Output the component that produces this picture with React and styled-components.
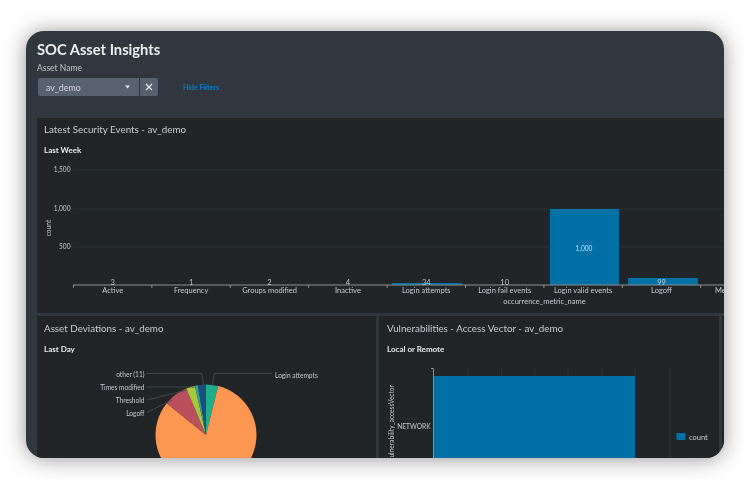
import React from "react";
import styled, { createGlobalStyle } from "styled-components";

const Global = createGlobalStyle`
  html, body { margin: 0; padding: 0; background: #fff; }
  body { font-family: Lato, "Open Sans", "Liberation Sans", sans-serif; }
`;

const Stage = styled.div`
  width: 750px;
  height: 480px;
  padding: 31px 0 0 26px;
  box-sizing: border-box;
  overflow: hidden;
`;
const Frame = styled.div`
  width: 698px;
  height: 427px;
  border-radius: 18px;
  box-shadow: 0 1px 22px rgba(0, 0, 0, 0.42);
  overflow: hidden;
  background: #31373f;
  display: flex;
  flex-direction: column;
`;
const Blur = styled.div`
  filter: blur(0.4px);
  display: flex;
  flex-direction: column;
  height: 100%;
`;
const Header = styled.header`
  height: 87px;
  flex: none;
  box-sizing: border-box;
  padding: 10px 0 0 11px;
`;
const Title = styled.h1`
  margin: 0;
  font-size: 14.7px;
  line-height: 17px;
  font-weight: 700;
  color: #eceef0;
`;
const FilterLabel = styled.div`
  margin-top: 4px;
  font-size: 8.5px;
  line-height: 12px;
  color: #c3c8cd;
`;
const FilterRow = styled.div`
  margin-top: 4px;
  display: flex;
  align-items: center;
  padding-left: 1px;
`;
const Select = styled.div`
  width: 101px;
  height: 18px;
  box-sizing: border-box;
  padding: 0 9px 0 8px;
  background: #58626e;
  border-radius: 2px 0 0 2px;
  display: flex;
  align-items: center;
  justify-content: space-between;
  font-size: 8.8px;
  color: #d4d8dc;
`;
const ClearButton = styled.div`
  width: 18px;
  height: 18px;
  margin-left: 1px;
  background: #58626e;
  border-radius: 0 2px 2px 0;
  display: flex;
  align-items: center;
  justify-content: center;
`;
const HideLink = styled.span`
  margin-left: 25px;
  font-size: 7px;
  font-weight: 700;
  color: #0a7cc4;
`;
const Dashboard = styled.div`
  flex: 1;
  min-height: 0;
  margin-left: 11px;
  display: flex;
  flex-direction: column;
  gap: 3px;
`;
const Row = styled.div`
  display: flex;
  gap: 3px;
  flex: ${(p) => (p.$grow ? 1 : "none")};
  min-height: 0;
`;
const Panel = styled.section`
  width: ${(p) => p.$w}px;
  height: ${(p) => (p.$h ? `${p.$h}px` : "auto")};
  flex: none;
  background: #212527;
  overflow: hidden;
  box-sizing: border-box;
  padding: ${(p) => p.$top ?? 6}px 0 0 ${(p) => p.$left ?? 7}px;
`;
const PanelTitle = styled.h2`
  margin: 0;
  font-size: 9.8px;
  line-height: 13px;
  font-weight: 400;
  color: #c8ccd0;
`;
const PanelSub = styled.h3`
  margin: 9px 0 0;
  font-size: 8px;
  line-height: 11px;
  font-weight: 700;
  color: #e6e8ea;
`;
const Chart = styled.svg`
  display: block;
  margin: 4px 0 0 ${(p) => -(p.$indent ?? 7)}px;
  text {
    font-family: Lato, "Open Sans", "Liberation Sans", sans-serif;
    font-size: 7.5px;
    fill: #c6cace;
  }
  text.small {
    font-size: 6.6px;
  }
`;

const categories = ["Active", "Frequency", "Groups modified", "Inactive", "Login attempts", "Login fail events", "Login valid events", "Logoff", "Member added"];
const values = ["3", "1", "2", "4", "34", "10", null, "99", null];
const slices = [
  [0, 14, "#1fae8b"],
  [14, 309, "#fd9650"],
  [309, 337, "#b9505c"],
  [337, 347.3, "#aac63a"],
  [347.3, 350.8, "#2aa5b0"],
  [350.8, 360, "#1a5077"],
];

function slicePath(a, b, cx = 206, cy = 435, r = 50.5) {
  const p = (d) => [cx + r * Math.sin((d * Math.PI) / 180), cy - r * Math.cos((d * Math.PI) / 180)];
  const [x1, y1] = p(a);
  const [x2, y2] = p(b);
  return `M${cx} ${cy}L${x1} ${y1}A${r} ${r} 0 ${b - a > 180 ? 1 : 0} 1 ${x2} ${y2}Z`;
}

function EventsChart() {
  return (
    <Chart width="687" height="153" viewBox="37 160 687 153">
      {[170, 209, 247].map((y) => (
        <line key={y} x1="73" x2="724" y1={y} y2={y} stroke="#2b3335" strokeWidth="1" />
      ))}
      {[["1,500", 172.3], ["1,000", 211.3], ["500", 249.3]].map(([t, y]) => (
        <text key={t} className="small" x="70.5" y={y} textAnchor="end">{t}</text>
      ))}
      <text className="small" transform="translate(50.5 228) rotate(-90)" textAnchor="middle">count</text>
      <rect x="392" y="283" width="70" height="2" fill="#0070a6" />
      <rect x="550" y="209" width="69" height="76" fill="#0070a6" />
      <rect x="628" y="278" width="70" height="7" fill="#0070a6" />
      <line x1="73" x2="724" y1="285" y2="285" stroke="#8b9094" strokeWidth="1.2" />
      {categories.map((c, i) => {
        const tick = 73.5 + i * 78.4;
        const mid = tick + 39.2;
        return (
          <g key={c}>
            <line x1={tick} x2={tick} y1="285" y2="288" stroke="#8b9094" strokeWidth="1" />
            <text x={mid} y="293" textAnchor="middle">{c}</text>
            {values[i] && <text x={mid} y="285" textAnchor="middle">{values[i]}</text>}
          </g>
        );
      })}
      <text className="small" x="584" y="251" textAnchor="middle" style={{ fill: "#cfe0ea" }}>1,000</text>
      <text x="544.5" y="304" textAnchor="middle">occurrence_metric_name</text>
    </Chart>
  );
}

function PieChart() {
  return (
    <Chart width="339" height="99" viewBox="37 359 339 99">
      {slices.map(([a, b, c]) => (
        <path key={c} d={slicePath(a, b)} fill={c} />
      ))}
      <g fill="none" stroke="#4a4f53" strokeWidth="0.8">
        <path d="M147 373.5H202L203.5 385" />
        <path d="M272 373.5H214L212.5 385" />
        <path d="M147 387H196" />
        <path d="M147 400L187 390" />
        <path d="M147 412.5L172 400" />
      </g>
      {[["other (11)", 376.5], ["Times modified", 390], ["Threshold", 403], ["Logoff", 415.5]].map(([t, y]) => (
        <text key={t} className="small" x="144.5" y={y} textAnchor="end">{t}</text>
      ))}
      <text className="small" x="275" y="377.5">Login attempts</text>
    </Chart>
  );
}

function VectorChart() {
  return (
    <Chart $indent={8} width="340" height="99" viewBox="379 359 340 99">
      {[468, 501.5, 535, 568, 602, 635, 670].map((x) => (
        <line key={x} x1={x} x2={x} y1="368" y2="458" stroke="#2f3437" strokeWidth="1" />
      ))}
      <rect x="434" y="376" width="201" height="82" fill="#0070a6" />
      <path d="M431 368.5H433.5V458" fill="none" stroke="#8b9094" strokeWidth="1" />
      <text className="small" x="430.5" y="428.5" textAnchor="end">NETWORK</text>
      <text className="small" transform="translate(394 385) rotate(-90)" textAnchor="end">vulnerability_accessVector</text>
      <rect x="676.5" y="433" width="9" height="7" fill="#0070a6" />
      <text x="689" y="439.5">count</text>
    </Chart>
  );
}

export default function App() {
  return (
    <Stage>
      <Global />
      <Frame>
        <Blur>
          <Header>
            <Title>SOC Asset Insights</Title>
            <FilterLabel>Asset Name</FilterLabel>
            <FilterRow>
              <Select>
                <span>av_demo</span>
                <svg width="5" height="4" viewBox="0 0 5 4"><path d="M0 0.5H5L2.5 3.5Z" fill="#e4e6e8" /></svg>
              </Select>
              <ClearButton>
                <svg width="8" height="8" viewBox="0 0 8 8"><path d="M1 1L7 7M7 1L1 7" stroke="#e4e6e8" strokeWidth="1.3" /></svg>
              </ClearButton>
              <HideLink>Hide Filters</HideLink>
            </FilterRow>
          </Header>
          <Dashboard>
            <Row>
              <Panel $w={687} $h={195} $top={5}>
                <PanelTitle>Latest Security Events - av_demo</PanelTitle>
                <PanelSub>Last Week</PanelSub>
                <EventsChart />
              </Panel>
            </Row>
            <Row $grow>
              <Panel $w={339}>
                <PanelTitle>Asset Deviations - av_demo</PanelTitle>
                <PanelSub>Last Day</PanelSub>
                <PieChart />
              </Panel>
              <Panel $w={340} $left={8}>
                <PanelTitle>Vulnerabilities - Access Vector - av_demo</PanelTitle>
                <PanelSub>Local or Remote</PanelSub>
                <VectorChart />
              </Panel>
              <Panel $w={5} />
            </Row>
          </Dashboard>
        </Blur>
      </Frame>
    </Stage>
  );
}
